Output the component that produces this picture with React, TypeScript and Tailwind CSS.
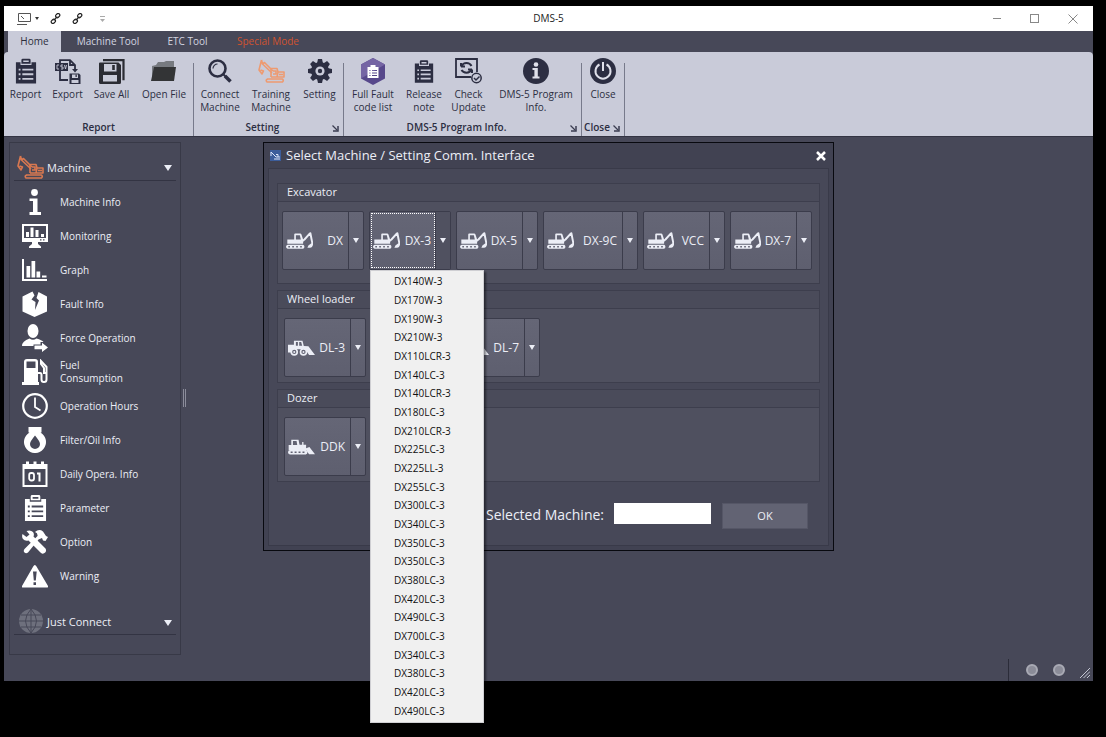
import type { ReactNode } from 'react';

type IconProps = { className?: string };

function Clipboard({ className = '' }: IconProps) {
  return (
    <svg viewBox="0 0 24 27" className={className} fill="currentColor" aria-hidden="true">
      <path fillRule="evenodd" d="M1 4h5v3h12V4h5v23H1zM4 11v2h2v-2zm4 0v2h12v-2zM4 16v2h2v-2zm4 0v2h12v-2zM4 21v2h2v-2zm4 0v2h12v-2z" />
      <path fillRule="evenodd" d="M7 1.500Q7 0 8.500 0h7Q17 0 17 1.500V5.500H7zM9 2v1.800h6V2z" />
    </svg>
  );
}

function CsvExport({ className = '' }: IconProps) {
  return (
    <svg viewBox="0 0 26 25" className={className} aria-hidden="true">
      <path d="M5 4V1.200h10l5 5V12M15 1.200V6h5M5 12v9h8" fill="none" stroke="currentColor" strokeWidth="1.800" />
      <path d="M0 4h13v8H0zM17 10h6l-3 3.500z" fill="currentColor" />
      <path d="M4 6H2v4h2M8 6H6v2h2v2H6M9.500 6l1 4 1-4" fill="none" stroke="#c9cbd9" strokeWidth=".9" />
      <path fillRule="evenodd" d="M14.500 14.500H24l1.500 1.500v9h-11zM17 15.500V19h6v-3.500zm-.5 5.500v3h7v-3z" fill="currentColor" />
      <path d="M20.500 15.500h1.300V18h-1.300z" fill="currentColor" />
    </svg>
  );
}

function SaveAll({ className = '' }: IconProps) {
  return (
    <svg viewBox="0 0 26 25" className={className} aria-hidden="true" fill="none" stroke="#2b2c33">
      <path d="M4 1.200h20.500v20" strokeWidth="2.200" />
      <path fillRule="evenodd" fill="#2b2c33" stroke="none" d="M1 3.500h18.500L22 6v17.500q0 1.500-1.500 1.500h-19Q0 25 0 23.500v-19q0-1 1-1zM5 5v7.500h12.500V5zM4 16v6.500h14V16z" />
      <path d="M14.500 6v5" strokeWidth="2.600" />
    </svg>
  );
}

function Folder({ className = '' }: IconProps) {
  return (
    <svg viewBox="0 0 26 22" className={className} aria-hidden="true">
      <path d="M1 21V6l4-1 2-3h6l2-1h8v14z" fill="#777a80" />
      <path d="M0 21 3 7h22l-2 14z" fill="#333436" />
    </svg>
  );
}

function Magnifier({ className = '' }: IconProps) {
  return (
    <svg viewBox="0 0 24 24" className={className} aria-hidden="true" fill="none" stroke="currentColor">
      <circle cx="9.500" cy="9.500" r="8" strokeWidth="2.600" />
      <path d="M5 9.500A4.500 4.500 0 0 1 9.500 5" strokeWidth="1.200" />
      <path d="m15 15 2.500 2.500" strokeWidth="2" />
      <path d="m17 17 5.500 5.500" strokeWidth="3.600" />
    </svg>
  );
}

function OrangeExcavator({ className = '' }: IconProps) {
  return (
    <svg viewBox="0 0 27 24" className={className} aria-hidden="true" fill="none" stroke="currentColor" strokeWidth="1.600" strokeLinejoin="round">
      <path d="M3.500 1 1 11l3 4 1.500-3-3-1M3.500 1l1 4L14 14M4.500 5l2-1.500L15 12" />
      <path d="M13 18v-8.500h6l1 3.500h6v5H13M15 12h3v3h-3M20 13l-1 5M21 15.500h4" />
      <path d="M9 20h15.500q1.500 1.500 0 3H9q-1.500-1.500 0-3" />
    </svg>
  );
}

function Gear({ className = '' }: IconProps) {
  return (
    <svg viewBox="-12 -12 24 24" className={className} aria-hidden="true">
      <g fill="currentColor">
        {[0, 45, 90, 135].map((a) => (
          <path key={a} transform={`rotate(${a})`} d="M-2.800-8.500-2-12h4l.8 3.500v17L2 12h-4l-.8-3.500z" />
        ))}
        <circle r="9" />
      </g>
      <circle r="4.600" fill="#c9cbd9" />
      <circle r="2.200" fill="currentColor" />
    </svg>
  );
}

function FaultHexagon({ className = '' }: IconProps) {
  return (
    <svg viewBox="0 0 24 27" className={className} aria-hidden="true">
      <path d="M12 0 24 6.500v14L12 27 0 20.500v-14z" fill="#57488b" />
      <path d="M12 0 24 6.500 0 20.500v-14z" fill="#7565a4" />
      <path fillRule="evenodd" fill="#fff" d="M6.500 9h3V7h5v2h3v11h-11zm1.800 3v1h1.200v-1zm2.700 0v1h5v-1zm-2.700 2.500v1h1.200v-1zm2.700 0v1h5v-1zM8.300 17v1h1.200v-1zm2.700 0v1h5v-1z" />
    </svg>
  );
}

function CheckUpdate({ className = '' }: IconProps) {
  return (
    <svg viewBox="0 0 27 26" className={className} aria-hidden="true" fill="none" stroke="currentColor">
      <path d="M16 19H1V1h21v13" strokeWidth="1.800" />
      <path d="M6 8.500V5M6 8.500h4M6.500 8c2-4 8-4 10 0M17 11.500V15M17 11.500h-4M16.500 12c-2 3.500-8 3.500-10 0" strokeWidth="2" />
      <circle cx="21.500" cy="20" r="4.700" strokeWidth="1.500" />
      <path d="m19 20 2 2 3.500-3.500" strokeWidth="1.500" />
    </svg>
  );
}

function InfoDisc({ className = '' }: IconProps) {
  return (
    <svg viewBox="0 0 26 26" className={className} aria-hidden="true">
      <circle cx="13" cy="13" r="13" fill="currentColor" />
      <circle cx="13" cy="6.500" r="2.300" fill="#dfe0ea" />
      <path d="M9.500 10h5.300v8.500h1.700v2h-7v-2h1.900V12H9.500z" fill="#dfe0ea" />
    </svg>
  );
}

function PowerDisc({ className = '' }: IconProps) {
  return (
    <svg viewBox="0 0 26 26" className={className} aria-hidden="true">
      <circle cx="13" cy="13" r="13" fill="currentColor" />
      <path d="M9.500 6.500a7.500 7.500 0 1 0 7 0M13 4v9" fill="none" stroke="#dfe0ea" strokeWidth="2" />
    </svg>
  );
}

function Launcher() {
  return (
    <svg viewBox="0 0 7 7" className="size-[7px] text-[#3a3d50]" aria-hidden="true" fill="none" stroke="currentColor">
      <path d="M.5.5 5 5" strokeWidth="1.200" />
      <path d="M6 1v5H1" strokeWidth="1.500" />
    </svg>
  );
}

function InfoGlyph() {
  return (
    <svg viewBox="0 0 26 26" className="size-[26px]" fill="currentColor" aria-hidden="true">
      <circle cx="12.500" cy="3.500" r="3.400" />
      <path d="M7.500 9.500h8V23H19v3H7.500v-3H11V12H7.500z" />
    </svg>
  );
}

function MonitorGlyph() {
  return (
    <svg viewBox="0 0 26 26" className="size-[26px]" fill="currentColor" aria-hidden="true">
      <path fillRule="evenodd" d="M0 1h26v18H0zm2 2v12h22V3zm16 13.200v1.300h1.500v-1.300zm3 0v1.300h1.500v-1.300z" />
      <path d="M4 9h3v5H4zM8.500 4.500h3V14h-3zM13.500 7h3v7h-3zM19 11h3v3h-3zM10 19h6v2l3 2.500V25H7v-1.500l3-2.500z" />
    </svg>
  );
}

function GraphGlyph() {
  return (
    <svg viewBox="0 0 26 26" className="size-[26px]" fill="currentColor" aria-hidden="true">
      <path d="M0 2h2v20h23v2H0zM4.500 9h3.700v11.500H4.500zM9.500 4h3.700v16.500H9.500zM14.500 14.500h3.700v6h-3.700zM20 18.500h4.500v2H20z" />
    </svg>
  );
}

function FaultGlyph() {
  return (
    <svg viewBox="0 0 26 26" className="size-[26px]" fill="currentColor" aria-hidden="true">
      <path d="M10.500.5 12.500 4.500 9.500 8.500l4 2.500-.500 8L17 9.500 14.500 7 16.500 1 25 5.500v15L12.500 26 .5 20.500v-15z" />
    </svg>
  );
}

function ForceGlyph() {
  return (
    <svg viewBox="0 0 26 28" className="h-[28px] w-[26px]" fill="currentColor" aria-hidden="true">
      <ellipse cx="11" cy="7" rx="5.500" ry="7" />
      <path d="M0 22q0-5 7.500-7.500 3.500 2.500 7 0Q20 16 21.500 18H18.500v2.500H11.500V22z" />
      <path d="M12.500 21.500H20V18.800l6 4.600-6 4.600v-2.700h-7.500z" />
    </svg>
  );
}

function FuelGlyph() {
  return (
    <svg viewBox="0 0 26 26" className="size-[26px]" aria-hidden="true">
      <path fillRule="evenodd" fill="currentColor" d="M2 3q0-3 3-3h8q3 0 3 3v20h1v3H0v-3h2zm2.500-.5V9h9V2.500z" />
      <path d="M16 14h2q1.500 0 1.500 2v4.500q0 2.500 2.500 2.500t2.500-2.500V8L19 2v3l3 4v5h2.500" fill="none" stroke="currentColor" strokeWidth="2" />
    </svg>
  );
}

function ClockGlyph() {
  return (
    <svg viewBox="0 0 26 26" className="size-[26px]" fill="none" stroke="currentColor" aria-hidden="true">
      <circle cx="13" cy="13" r="11.800" strokeWidth="2.200" />
      <path d="M13 4.500V14l5.500 3.500" strokeWidth="1.800" />
    </svg>
  );
}

function OilGlyph() {
  return (
    <svg viewBox="0 0 26 26" className="size-[26px]" fill="currentColor" aria-hidden="true">
      <path fillRule="evenodd" d="M6.500 0h13v5.500h-1A11 11 0 1 1 7.500 5.500h-1zM13 8.500q-5 6-5 8.500a5 5 0 0 0 10 0q0-2.500-5-8.500z" />
    </svg>
  );
}

function CalendarGlyph() {
  return (
    <svg viewBox="0 0 26 26" className="size-[26px]" aria-hidden="true">
      <path fillRule="evenodd" fill="currentColor" d="M.5 3H4V.500h3V3h4.500V.500h3V3H19V.500h3V3h3.500v23H.5zM2.500 8v16h21V8z" />
      <rect x="7.200" y="12" width="4.800" height="7.500" rx="2" fill="none" stroke="currentColor" strokeWidth="1.800" />
      <path d="M15 12.500h2.500V20.500" fill="none" stroke="currentColor" strokeWidth="2" />
    </svg>
  );
}

function OptionGlyph() {
  return (
    <svg viewBox="0 0 26 26" className="size-[26px]" fill="currentColor" aria-hidden="true">
      <path d="M.5 5 4.500 8l3-2.500L4.500 2q4-1.500 6.500 1 1.500 2 .5 4.500l12 12q1.500 3-1 4.500t-4-.5l-12-12Q3 12.500 1 10-.5 8 .5 5z" />
      <path d="M13 3q4-3.500 8-.5l3 4.500 2 1-2.500 4-2.500-.5-1-2.500-3.500 1.500L6 23.500q-2 1.500-3.500 0t0-3.500L15.500 7q.5-3-2.500-4z" />
    </svg>
  );
}

function WarningGlyph() {
  return (
    <svg viewBox="0 0 26 26" className="size-[26px]" fill="currentColor" aria-hidden="true">
      <path fillRule="evenodd" d="M12.800 2q1 0 1.700 1.500L26 23q.3 1.500-1 1.500H1q-1.500 0-1-1.500L11.200 3.500Q12 2 12.800 2zM11 8.500l.8 9h2l.9-9zm.5 10.700V22H14v-2.800z" />
    </svg>
  );
}

function GlobeGlyph() {
  return (
    <svg viewBox="0 0 24 24" className="size-[24px]" aria-hidden="true">
      <circle cx="12" cy="12" r="12" fill="#6e707d" />
      <path d="M12 0v24M0 12h24M2 6h20M2 18h20M12 0Q1 12 12 24M12 0q11 12 0 24" fill="none" stroke="#474858" strokeWidth="1" />
    </svg>
  );
}

function ExcavatorGlyph() {
  return (
    <svg viewBox="0 0 82 50" className="h-[17px] w-[27px] shrink-0" fill="currentColor" aria-hidden="true">
      <path fillRule="evenodd" d="M4 22h21V7q0-3 3-3h15q3 0 4 3l5 15v13H4zM30 9v13h15L42 9z" />
      <path d="M48 28 56 22 72 4M74 3l6 30" fill="none" stroke="currentColor" strokeWidth="6" strokeLinecap="round" strokeLinejoin="round" />
      <path d="M82 30v8q-2 9-9 9h-8q1-8 10-12z" />
      <path fillRule="evenodd" d="M5 38h47q4 1 4 6t-4 6H5q-5-1-5-6t5-6zm2 4v4h5v-4zm12 0v4h5v-4zm12 0v4h5v-4zm12 0v4h5v-4z" />
    </svg>
  );
}

function LoaderGlyph() {
  return (
    <svg viewBox="0 0 82 48" className="h-[16px] w-[27px] shrink-0" fill="currentColor" aria-hidden="true">
      <path fillRule="evenodd" d="M0 14h18V2h26l4 16 14 1 20 26H64l-6-9-6-8H28L10 38H0zM24 6v11h6V6zm10 0v11h9L40 6z" />
      <circle cx="19" cy="36" r="9" fill="#626373" stroke="currentColor" strokeWidth="5" />
      <circle cx="47" cy="36" r="9" fill="#626373" stroke="currentColor" strokeWidth="5" />
      <circle cx="19" cy="36" r="3" />
      <circle cx="47" cy="36" r="3" />
    </svg>
  );
}

function DozerGlyph() {
  return (
    <svg viewBox="0 0 82 48" className="h-[16px] w-[27px] shrink-0" fill="currentColor" aria-hidden="true">
      <path fillRule="evenodd" d="M2 18h8V2h22l3 15h8V9h4v8h8v11l10-4 17 22H64l-9-12H2zM15 6v12h13L26 6z" />
      <path fillRule="evenodd" d="M6 33h48q5 2 5 7t-5 7H6q-6-1-6-7t6-7zm2 5v4h6v-4zm12 0v4h6v-4zm12 0v4h6v-4zm12 0v4h6v-4z" />
    </svg>
  );
}

function RibbonButton({ width, icon, children }: { width: string; icon: ReactNode; children: ReactNode }) {
  return (
    <button type="button" className={`flex flex-col items-center text-[10px] leading-[13px] ${width}`}>
      <span className="flex h-[36px] items-center justify-center pt-[2px]">{icon}</span>
      <span className="text-center whitespace-nowrap">{children}</span>
    </button>
  );
}

function RibbonGroup({ title, launcher = false, children }: { title: string; launcher?: boolean; children: ReactNode }) {
  return (
    <section className="flex">
      <div className="flex flex-col justify-between">
        <div className="flex">{children}</div>
        <div className="relative flex h-[18px] items-center justify-center text-[10px] font-semibold">
          <h2 className={launcher ? 'pr-3' : ''}>{title}</h2>
          {launcher && (
            <button type="button" aria-label={`${title} options`} className="absolute right-1 bottom-1">
              <Launcher />
            </button>
          )}
        </div>
      </div>
      <div className="mt-[11px] w-px bg-[#777a8b]" />
    </section>
  );
}

const arrow = 'inline-block border-x-[3px] border-t-[5px] border-x-transparent border-t-[#eceef6]';

function SplitButton({ label, icon, wide = false, open = false }: { label: string; icon: ReactNode; wide?: boolean; open?: boolean }) {
  return (
    <div className={`relative flex h-[59px] rounded-xs border border-[#3b3c4b] bg-linear-to-b from-[#656676] to-[#5e5f6f] ${wide ? 'w-[95px]' : 'w-[82px]'}`}>
      <button
        type="button"
        className={`flex flex-1 items-center justify-between text-[12px] ${open ? 'm-px mr-0 border border-dotted border-white pr-[3px] pl-px' : 'pr-[5px] pl-[3px]'}`}
      >
        {icon}
        <span>{label}</span>
      </button>
      <button
        type="button"
        aria-label={`${label} models`}
        className={`flex w-[15px] items-center justify-center border-l border-[#3b3c4b] ${open ? 'bg-[#505160]' : ''}`}
      >
        <span className={arrow} />
      </button>
      {open && <ModelMenu />}
    </div>
  );
}

const models = [
  'DX140W-3', 'DX170W-3', 'DX190W-3', 'DX210W-3', 'DX110LCR-3', 'DX140LC-3', 'DX140LCR-3', 'DX180LC-3',
  'DX210LCR-3', 'DX225LC-3', 'DX225LL-3', 'DX255LC-3', 'DX300LC-3', 'DX340LC-3', 'DX350LC-3', 'DX350LC-3',
  'DX380LC-3', 'DX420LC-3', 'DX490LC-3', 'DX700LC-3', 'DX340LC-3', 'DX380LC-3', 'DX420LC-3', 'DX490LC-3',
];

function ModelMenu() {
  return (
    <ul className="absolute top-full left-0 z-10 mt-px flex h-[453px] w-[114px] flex-col border border-[#cfcfd3] bg-[#f0f0f0] pt-px pb-[2px] text-[10px] text-[#111] shadow-[2px_2px_2px_rgba(0,0,0,0.45)]">
      {models.map((m, i) => (
        <li key={i} className="flex flex-1">
          <button type="button" className="flex flex-1 items-center pl-[23px] leading-none">{m}</button>
        </li>
      ))}
    </ul>
  );
}

function MachineGroup({ title, children }: { title: string; children: ReactNode }) {
  return (
    <section className="border border-[#3d3e4d] bg-[#4f505f]">
      <h3 className="flex h-[18px] items-center border-b border-[#3d3e4d] bg-[#4a4b5a] pl-[9px] text-[11px]">{title}</h3>
      {children}
    </section>
  );
}

const items: { label: string; icon: ReactNode }[] = [
  { label: 'Machine Info', icon: <InfoGlyph /> },
  { label: 'Monitoring', icon: <MonitorGlyph /> },
  { label: 'Graph', icon: <GraphGlyph /> },
  { label: 'Fault Info', icon: <FaultGlyph /> },
  { label: 'Force Operation', icon: <ForceGlyph /> },
  { label: 'Fuel Consumption', icon: <FuelGlyph /> },
  { label: 'Operation Hours', icon: <ClockGlyph /> },
  { label: 'Filter/Oil Info', icon: <OilGlyph /> },
  { label: 'Daily Opera. Info', icon: <CalendarGlyph /> },
  { label: 'Parameter', icon: <Clipboard className="h-[26px] w-[23px]" /> },
  { label: 'Option', icon: <OptionGlyph /> },
  { label: 'Warning', icon: <WarningGlyph /> },
];

function Sidebar() {
  const header = 'mx-[4px] flex items-center border-b border-[#333443] pr-[4px] text-[11px]';
  return (
    <nav className="flex w-[172px] flex-col border border-[#383947] pb-[19px] text-[#eceef6]">
      <button type="button" className={`${header} h-[38px] pt-[13px]`}>
        <span className="flex w-[33px] justify-center pb-[3px]">
          <OrangeExcavator className="h-[24px] w-[27px] text-[#d97850]" />
        </span>
        <span className="flex-1 text-left">Machine</span>
        <span className="border-x-4 border-t-[6px] border-x-transparent border-t-[#eceef6]" />
      </button>
      <ul className="mt-[4px]">
        {items.map((it) => (
          <li key={it.label}>
            <button type="button" className="flex h-[34px] w-full items-center pl-[12px] text-left text-[10px] leading-[13px]">
              <span className="flex w-[26px] justify-center text-white">{it.icon}</span>
              <span className="ml-[12px] w-[84px]">{it.label}</span>
            </button>
          </li>
        ))}
      </ul>
      <button type="button" className={`${header} mt-[10px] h-[32px] pt-[8px]`}>
        <span className="flex w-[33px] justify-center pb-1">
          <GlobeGlyph />
        </span>
        <span className="flex-1 text-left">Just Connect</span>
        <span className="border-x-4 border-t-[6px] border-x-transparent border-t-[#eceef6]" />
      </button>
    </nav>
  );
}

function SelectDialog() {
  return (
    <div role="dialog" aria-labelledby="dialog-title" className="ml-[77px] w-[571px] border border-[#08090f] bg-[#414252] px-[4px] pb-[4px] text-[#eceef6]">
      <header className="flex h-[25px] items-center pr-px pl-[2px]">
        <svg viewBox="0 0 11 11" className="size-[11px]" aria-hidden="true">
          <path d="M0 0h11v11H0z" fill="#3c5d9b" />
          <path d="M1 2v4M1 2l5 5h4M6 4.500h2V7M4 9h6" fill="none" stroke="#dce6fa" />
        </svg>
        <h1 id="dialog-title" className="ml-[5px] flex-1 text-[13px]">Select Machine / Setting Comm. Interface</h1>
        <button type="button" aria-label="Close dialog" className="p-[2px]">
          <svg viewBox="0 0 10 10" className="size-[10px]" fill="none" stroke="#fff" strokeWidth="2.500" aria-hidden="true">
            <path d="m1 1 8 8M9 1 1 9" />
          </svg>
        </button>
      </header>
      <div className="flex flex-col gap-[6px] border border-[#393a49] bg-[#474858] px-[8px] pt-[14px] pb-[16px]">
        <MachineGroup title="Excavator">
          <div className="flex gap-[5px] px-[4px] pt-[9px] pb-[13px]">
            <SplitButton label="DX" icon={<ExcavatorGlyph />} />
            <SplitButton label="DX-3" icon={<ExcavatorGlyph />} open />
            <SplitButton label="DX-5" icon={<ExcavatorGlyph />} />
            <SplitButton label="DX-9C" icon={<ExcavatorGlyph />} wide />
            <SplitButton label="VCC" icon={<ExcavatorGlyph />} />
            <SplitButton label="DX-7" icon={<ExcavatorGlyph />} />
          </div>
        </MachineGroup>
        <MachineGroup title="Wheel loader">
          <div className="grid grid-cols-[82px_82px_82px] gap-[5px] px-[6px] pt-[9px] pb-[5px]">
            <SplitButton label="DL-3" icon={<LoaderGlyph />} />
            <div className="col-start-3">
              <SplitButton label="DL-7" icon={<LoaderGlyph />} />
            </div>
          </div>
        </MachineGroup>
        <MachineGroup title="Dozer">
          <div className="flex gap-[5px] px-[6px] pt-[9px] pb-[5px]">
            <SplitButton label="DDK" icon={<DozerGlyph />} />
          </div>
        </MachineGroup>
        <form className="mt-[15px] flex items-start justify-end pr-[12px]">
          <label htmlFor="machine" className="text-[14px] leading-[24px]">Selected Machine:</label>
          <input id="machine" type="text" className="ml-[10px] h-[21px] w-[97px] bg-white px-1 text-[11px] text-black" />
          <button type="button" className="ml-[11px] h-[26px] w-[86px] border border-[#555666] bg-[#626373] text-[11px]">OK</button>
        </form>
      </div>
    </div>
  );
}

export default function App() {
  return (
    <div className="min-h-screen bg-black pt-[6px] pr-[13px] pb-[56px] pl-[4px] font-['Open_Sans','Noto_Sans',sans-serif]">
      <div className="flex min-h-[675px] flex-col bg-[#474858]">
        <header className="grid h-[25px] grid-cols-3 items-center bg-white text-[10px] text-[#222]">
          <div className="flex items-center pl-[13px]">
            <svg viewBox="0 0 14 12" className="h-[12px] w-[14px]" fill="none" stroke="#555" aria-hidden="true">
              <path d="M1.500.500h12v8h-12zM0 11.500h10" />
              <path d="m4 3 3 3" />
            </svg>
            <span className="ml-[4px] border-x-2 border-t-[3px] border-x-transparent border-t-[#333]" />
            {[0, 1].map((n) => (
              <svg key={n} viewBox="0 0 12 12" className="ml-[11px] size-[11px]" fill="none" stroke="#222" strokeWidth="1.300" aria-hidden="true">
                <rect x="6" y="1" width="5" height="3.600" rx="1.800" transform="rotate(-45 8.500 3)" />
                <rect x="1" y="7.400" width="5" height="3.600" rx="1.800" transform="rotate(-45 3.500 9)" />
                <path d="m4 8 4-4" />
              </svg>
            ))}
            <svg viewBox="0 0 5 6" className="ml-[17px] h-[6px] w-[5px]" aria-hidden="true">
              <path d="M0 .5h5" stroke="#aaa" />
              <path d="M0 3h5L2.500 6z" fill="#aaa" />
            </svg>
          </div>
          <div className="text-center">DMS-5</div>
          <div className="flex items-center justify-end gap-[29px] pr-[15px] text-[#888]">
            <button type="button" aria-label="Minimize" className="h-px w-[8px] bg-[#888]" />
            <button type="button" aria-label="Maximize" className="size-[9px] border border-[#888]" />
            <button type="button" aria-label="Close window">
              <svg viewBox="0 0 10 10" className="size-[10px]" fill="none" stroke="#888" aria-hidden="true">
                <path d="m.5.5 9 9M9.500.500l-9 9" />
              </svg>
            </button>
          </div>
        </header>

        <div role="tablist" className="flex h-[21px] text-[10px] text-[#d3d5e0]">
          <button type="button" role="tab" aria-selected="true" className="ml-[4px] w-[53px] bg-[#c9cbd9] text-[#2c2e3c]">Home</button>
          <button type="button" role="tab" className="w-[94px]">Machine Tool</button>
          <button type="button" role="tab" className="w-[65px]">ETC Tool</button>
          <button type="button" role="tab" className="w-[96px] text-[#d0532f]">Special Mode</button>
        </div>

        <div className="flex h-[84px] rounded-t-sm bg-[#c9cbd9] text-[#2c2e42]">
          <RibbonGroup title="Report">
            <RibbonButton width="w-[43px]" icon={<Clipboard className="h-[26px] w-[22px]" />}>Report</RibbonButton>
            <RibbonButton width="w-[41px]" icon={<CsvExport className="h-[25px] w-[26px]" />}>Export</RibbonButton>
            <RibbonButton width="w-[47px]" icon={<SaveAll className="h-[25px] w-[26px]" />}>Save All</RibbonButton>
            <RibbonButton width="w-[58px]" icon={<Folder className="h-[22px] w-[26px]" />}>Open File</RibbonButton>
          </RibbonGroup>
          <RibbonGroup title="Setting" launcher>
            <RibbonButton width="w-[52px]" icon={<Magnifier className="size-[24px]" />}>Connect<br />Machine</RibbonButton>
            <RibbonButton width="w-[50px]" icon={<OrangeExcavator className="h-[24px] w-[27px] text-[#ee9a70]" />}>Training<br />Machine</RibbonButton>
            <RibbonButton width="w-[47px]" icon={<Gear className="size-[24px]" />}>Setting</RibbonButton>
          </RibbonGroup>
          <RibbonGroup title="DMS-5 Program Info." launcher>
            <RibbonButton width="w-[58px]" icon={<FaultHexagon className="h-[27px] w-[24px]" />}>Full Fault<br />code list</RibbonButton>
            <RibbonButton width="w-[44px]" icon={<Clipboard className="h-[25px] w-[20px]" />}>Release<br />note</RibbonButton>
            <RibbonButton width="w-[45px]" icon={<CheckUpdate className="h-[26px] w-[27px]" />}>Check<br />Update</RibbonButton>
            <RibbonButton width="w-[90px]" icon={<InfoDisc className="size-[26px]" />}>DMS-5 Program<br />Info.</RibbonButton>
          </RibbonGroup>
          <RibbonGroup title="Close" launcher>
            <RibbonButton width="w-[42px]" icon={<PowerDisc className="size-[26px]" />}>Close</RibbonButton>
          </RibbonGroup>
        </div>

        <main className="flex flex-1 items-start border-t border-[#333443] pt-[5px] pl-[5px]">
          <Sidebar />
          <div className="mt-[247px] ml-[2px] h-[18px] w-[3px] border-x border-[#8b8c9a]" />
          <SelectDialog />
        </main>

        <footer className="flex h-[22px] items-center justify-end gap-[15px] pr-[3px]">
          <span className="mr-[2px] h-full w-px bg-[#2b2c39]" />
          <span className="size-[12px] rounded-full border-2 border-[#a9aab4] bg-[#8b8c98]" />
          <span className="size-[12px] rounded-full border-2 border-[#a9aab4] bg-[#8b8c98]" />
          <svg viewBox="0 0 10 10" className="mb-[3px] size-[10px] self-end" fill="none" stroke="#c5c7d4" aria-hidden="true">
            <path d="m0 10 10-10M3.500 10 10 3.500M7 10l3-3" />
          </svg>
        </footer>
      </div>
    </div>
  );
}
